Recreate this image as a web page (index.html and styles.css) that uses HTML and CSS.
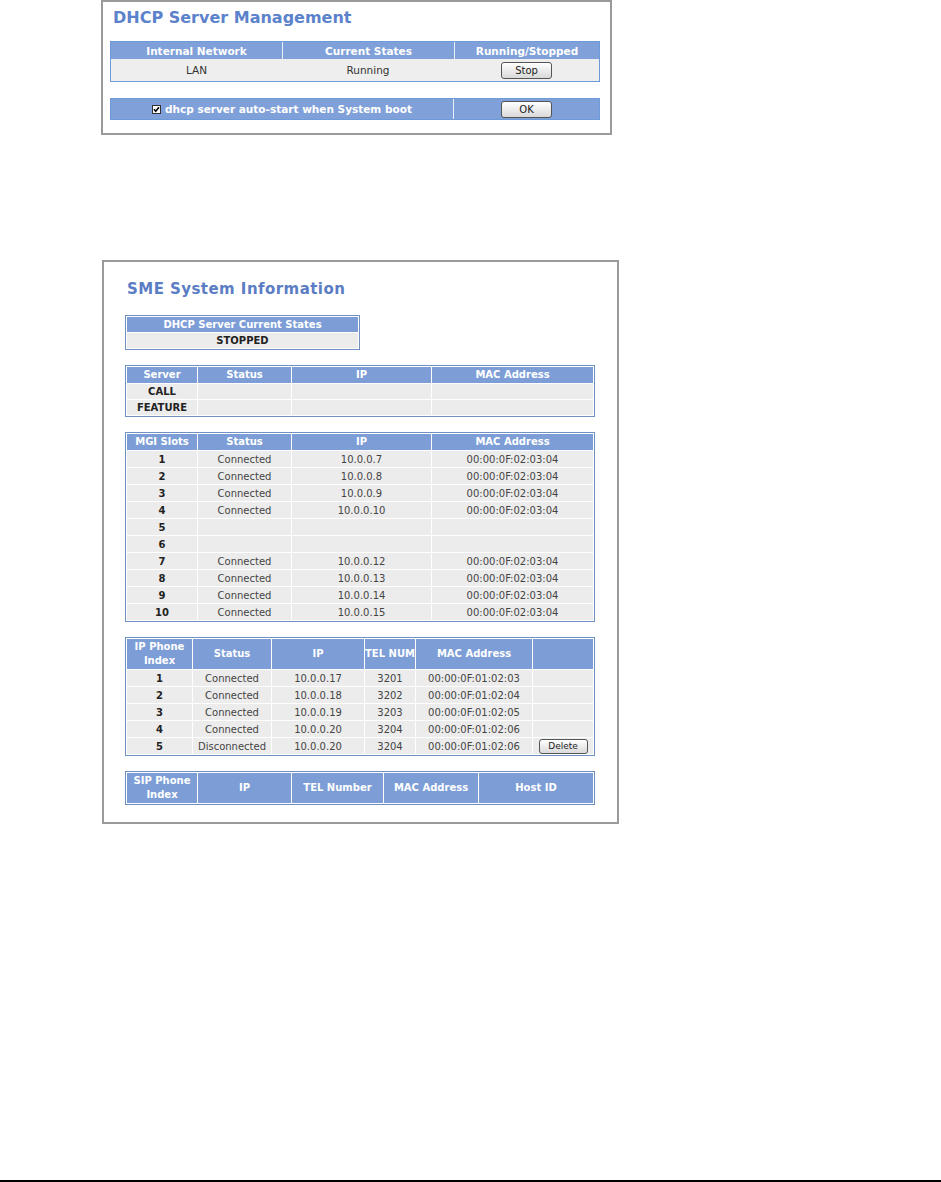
FILE: index.html
```html
<!DOCTYPE html>
<html lang="en">
<head>
    <meta charset="UTF-8">
    <title>DHCP Server Management</title>
    <link rel="stylesheet" href="styles.css">
</head>
<body>
    <div class="panel dhcp">
        <h1 class="title">DHCP Server Management</h1>
        <table class="mgmt">
            <tr>
                <th class="m1">Internal Network</th>
                <th class="m2">Current States</th>
                <th>Running/Stopped</th>
            </tr>
            <tr>
                <td>LAN</td>
                <td>Running</td>
                <td><button class="btn">Stop</button></td>
            </tr>
        </table>
        <table class="mgmt auto">
            <tr>
                <td class="opt m12">
                    <svg class="chk" width="9" height="9" viewBox="0 0 9 9"><rect x="0.5" y="0.5" width="8" height="8" fill="#fff" stroke="#333"/><path d="M2 4.3 L3.7 6.3 L7 2.3" stroke="#000" stroke-width="1.6" fill="none"/></svg>dhcp server auto-start when System boot
                </td>
                <td class="opt"><button class="btn">OK</button></td>
            </tr>
        </table>
    </div>

    <div class="panel sme">
        <h2 class="title">SME System Information</h2>

        <table class="info states compact">
            <tr><th>DHCP Server Current States</th></tr>
            <tr><td class="num">STOPPED</td></tr>
        </table>

        <table class="info wide compact">
            <tr>
                <th class="c70">Server</th>
                <th class="c93">Status</th>
                <th class="c139">IP</th>
                <th>MAC Address</th>
            </tr>
            <tr><td class="num">CALL</td><td></td><td></td><td></td></tr>
            <tr><td class="num">FEATURE</td><td></td><td></td><td></td></tr>
        </table>

        <table class="info wide">
            <tr>
                <th class="c70">MGI Slots</th>
                <th class="c93">Status</th>
                <th class="c139">IP</th>
                <th>MAC Address</th>
            </tr>
            <tr><td class="num">1</td><td>Connected</td><td>10.0.0.7</td><td>00:00:0F:02:03:04</td></tr>
            <tr><td class="num">2</td><td>Connected</td><td>10.0.0.8</td><td>00:00:0F:02:03:04</td></tr>
            <tr><td class="num">3</td><td>Connected</td><td>10.0.0.9</td><td>00:00:0F:02:03:04</td></tr>
            <tr><td class="num">4</td><td>Connected</td><td>10.0.0.10</td><td>00:00:0F:02:03:04</td></tr>
            <tr><td class="num">5</td><td></td><td></td><td></td></tr>
            <tr><td class="num">6</td><td></td><td></td><td></td></tr>
            <tr><td class="num">7</td><td>Connected</td><td>10.0.0.12</td><td>00:00:0F:02:03:04</td></tr>
            <tr><td class="num">8</td><td>Connected</td><td>10.0.0.13</td><td>00:00:0F:02:03:04</td></tr>
            <tr><td class="num">9</td><td>Connected</td><td>10.0.0.14</td><td>00:00:0F:02:03:04</td></tr>
            <tr><td class="num">10</td><td>Connected</td><td>10.0.0.15</td><td>00:00:0F:02:03:04</td></tr>
        </table>

        <table class="info wide">
            <tr class="tall">
                <th class="c65">IP Phone<br>Index</th>
                <th class="c78">Status</th>
                <th class="c92">IP</th>
                <th class="c50">TEL NUM</th>
                <th class="c116">MAC Address</th>
                <th></th>
            </tr>
            <tr><td class="num">1</td><td>Connected</td><td>10.0.0.17</td><td>3201</td><td>00:00:0F:01:02:03</td><td></td></tr>
            <tr><td class="num">2</td><td>Connected</td><td>10.0.0.18</td><td>3202</td><td>00:00:0F:01:02:04</td><td></td></tr>
            <tr><td class="num">3</td><td>Connected</td><td>10.0.0.19</td><td>3203</td><td>00:00:0F:01:02:05</td><td></td></tr>
            <tr><td class="num">4</td><td>Connected</td><td>10.0.0.20</td><td>3204</td><td>00:00:0F:01:02:06</td><td></td></tr>
            <tr><td class="num">5</td><td>Disconnected</td><td>10.0.0.20</td><td>3204</td><td>00:00:0F:01:02:06</td><td><button class="btn del">Delete</button></td></tr>
        </table>

        <table class="info wide">
            <tr class="tall">
                <th class="c70">SIP Phone<br>Index</th>
                <th class="c93">IP</th>
                <th class="c91">TEL Number</th>
                <th class="c94">MAC Address</th>
                <th>Host ID</th>
            </tr>
        </table>
    </div>

    <div class="rule"></div>
</body>
</html>
```

FILE: styles.css
```css
body {
    margin: 0;
    min-height: 1182px;
    display: flex;
    flex-direction: column;
    align-items: flex-start;
    font-family: "DejaVu Sans", Verdana, sans-serif;
    background: #fff;
}
.panel {
    box-sizing: border-box;
    border: 2px solid #9a9a9a;
}
.title {
    margin: 0;
    font-weight: bold;
    line-height: 20px;
}
.dhcp {
    margin-left: 101px;
    width: 511px;
    padding: 6px 7px 13px 7px;
}
.dhcp .title {
    font-size: 16px;
    color: #5b82cb;
    margin: 0 0 13px 3px;
}
.mgmt {
    width: 490px;
    table-layout: fixed;
    border-collapse: separate;
    border-spacing: 0;
    border: 1px solid #6d9ad8;
    font-size: 10.5px;
}
.mgmt th {
    height: 17px;
    padding: 0;
    background: #7fa0d8;
    color: #fff;
    font-weight: bold;
}
.mgmt th + th {
    border-left: 1px solid #e8eefa;
}
.mgmt td {
    height: 22px;
    padding: 0;
    text-align: center;
    background: #eeeeee;
    color: #333;
}
.m1 { width: 171px; }
.m2 { width: 171px; }
.m12 { width: 342px; }
.auto {
    margin-top: 16px;
}
.mgmt td.opt {
    height: 20px;
    background: #7fa0d8;
    color: #fff;
    font-weight: bold;
}
.mgmt td.opt + td.opt {
    border-left: 1px solid #e8eefa;
}
.chk {
    vertical-align: -1px;
    margin-right: 4px;
}
.btn {
    width: 51px;
    height: 17px;
    padding: 0;
    font-family: "DejaVu Sans", Verdana, sans-serif;
    font-size: 10px;
    color: #222;
    border: 1px solid #555;
    border-radius: 3px;
    background: linear-gradient(#ffffff, #d9d9d9);
    vertical-align: middle;
}
.btn.del {
    width: 49px;
    height: 15px;
    font-size: 9px;
}
.sme {
    margin: 125px 0 0 102px;
    width: 517px;
    padding: 17px 21px 17px 21px;
}
.sme .title {
    font-size: 15px;
    letter-spacing: 0.45px;
    color: #5b7dc4;
    margin: 0 0 16px 2px;
}
.info {
    table-layout: fixed;
    border-collapse: separate;
    border-spacing: 1px;
    border: 1px solid #7090c2;
    background: #fff;
    font-size: 10px;
}
.info + .info {
    margin-top: 15px;
}
.states {
    width: 235px;
}
.wide {
    width: 470px;
}
.info th {
    height: 16px;
    padding: 0;
    background: #7c9dd6;
    color: #fff;
    font-weight: bold;
    line-height: 14px;
}
.info .tall th {
    height: 30px;
}
.info td {
    height: 16px;
    padding: 0;
    text-align: center;
    background: #ececec;
    color: #444;
}
.info.compact td {
    height: 15px;
}
.info.states th {
    height: 15px;
}
.info td.num {
    font-weight: bold;
    color: #222;
}
.c50 { width: 50px; }
.c65 { width: 65px; }
.c70 { width: 70px; }
.c78 { width: 78px; }
.c91 { width: 91px; }
.c92 { width: 92px; }
.c93 { width: 93px; }
.c94 { width: 94px; }
.c116 { width: 116px; }
.c139 { width: 139px; }
.rule {
    margin-top: auto;
    align-self: stretch;
    border-top: 2px solid #000;
}
```
